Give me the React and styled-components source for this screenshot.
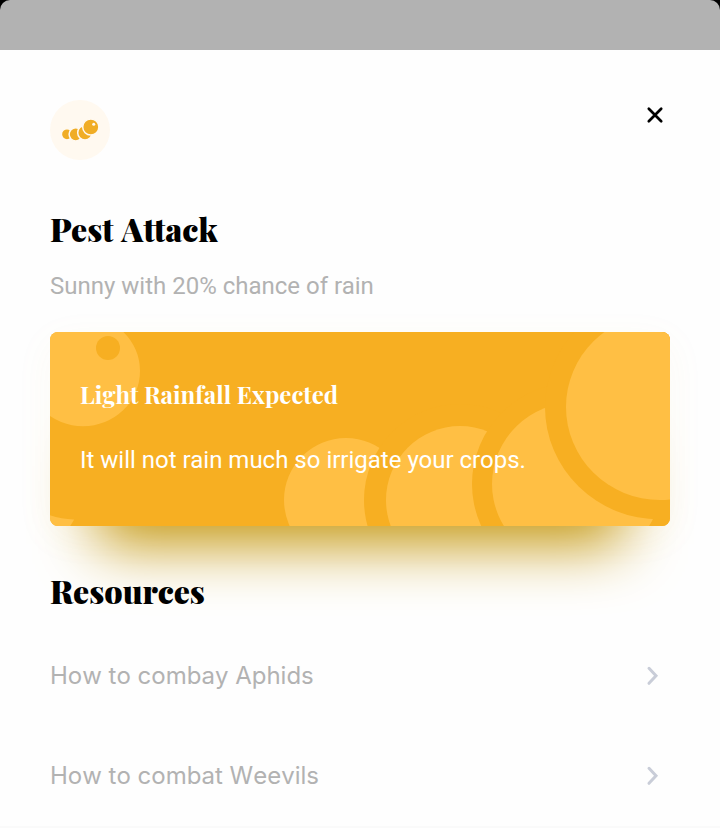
import React from "react";
import styled, { createGlobalStyle } from "styled-components";

const GlobalStyle = createGlobalStyle`
  *, *::before, *::after { box-sizing: border-box; }
  body { margin: 0; background: #000; }
`;

const Screen = styled.main`
  height: 828px;
  overflow: hidden;
  border-radius: 10px 10px 0 0;
  background: #b2b2b2;
  padding-top: 50px;
  font-family: Roboto, "Liberation Sans", sans-serif;
`;

const Sheet = styled.section`
  height: 778px;
  padding: 50px 50px 0;
  background: #fefefe;
`;

const Header = styled.header`
  display: flex;
  justify-content: space-between;
  align-items: flex-start;
  height: 60px;
`;

const CloseButton = styled.button`
  display: flex;
  width: 30px;
  height: 30px;
  padding: 0;
  border: 0;
  background: transparent;
`;

const Heading = styled.h2`
  margin: ${(p) => p.$top}px 0 0;
  height: 44px;
  font: 900 32px/41px "Playfair Display", "Liberation Serif", serif;
  word-spacing: 2px;
  color: #000;
  white-space: nowrap;
`;

const Summary = styled.p`
  margin: 19px 0 0;
  height: 30px;
  font-size: 24px;
  line-height: 30px;
  color: #b2b2b2;
`;

const Card = styled.article`
  display: grid;
  height: 194px;
  margin-top: 31px;
  border-radius: 8px;
  background: #f7af22;
  overflow: hidden;
  box-shadow: 0 66px 60px -48px #c4960c, 0 10px 40px rgba(220, 180, 60, 0.05);

  > * { grid-area: 1 / 1; }
`;

const CardBody = styled.div`
  z-index: 1;
  padding: 47px 30px 0;
  color: #fff;
`;

const CardTitle = styled.h3`
  margin: 0;
  height: 32px;
  font: 700 24px/30px "Playfair Display", "Liberation Serif", serif;
`;

const CardText = styled.p`
  margin: 34px 0 0;
  font-size: 24px;
  line-height: 30px;
`;

const ResourceList = styled.ul`
  list-style: none;
  margin: 12px 0 0;
  padding: 0;
`;

const ResourceRow = styled.li`
  display: flex;
  align-items: center;
  justify-content: space-between;
  height: 100px;
  font: 400 24px/30px Inter, sans-serif;
  font-kerning: none;
  color: #b2b2b2;

  svg { margin-right: 10px; }
`;

const Divider = styled.div`
  height: 2px;
  margin: 0 -50px;
  background: #fafafa;
`;

const PestBadge = () => (
  <svg width="60" height="60" viewBox="50 100 60 60">
    <circle cx="80" cy="130" r="30" fill="#fff9f0" />
    <g fill="#f0ad26" stroke="#fff9f0" strokeWidth="1.5">
      <circle cx="67" cy="134.3" r="5.6" />
      <circle cx="75.7" cy="134.3" r="6.6" />
      <circle cx="85" cy="132.7" r="7.3" />
      <circle cx="90.8" cy="127" r="8.1" />
    </g>
    <circle cx="93.7" cy="124.2" r="1.5" fill="#fff9f0" />
  </svg>
);

const CloseIcon = () => (
  <svg width="30" height="30" viewBox="0 0 30 30">
    <path d="M8.8 8.8L21.2 21.2M21.2 8.8L8.8 21.2" stroke="#000" strokeWidth="2.7" strokeLinecap="round" />
  </svg>
);

const Chevron = () => (
  <svg width="15" height="20" viewBox="0 0 15 20">
    <path d="M4 2.3L11 9.8L4 17.3" fill="none" stroke="#c9cdd8" strokeWidth="3" strokeLinecap="round" strokeLinejoin="miter" />
  </svg>
);

const Caterpillar = () => (
  <svg width="620" height="194" viewBox="50 332 620 194">
    <g fill="#ffbf44">
      <ellipse cx="83" cy="371" rx="57" ry="55.3" />
      <path d="M50 515.3Q62 519.5 74.2 519.4L70.2 526H50Z" />
      <circle cx="346" cy="500" r="62" />
    </g>
    <g fill="#f7af22">
      <circle cx="108" cy="348" r="12" />
      <circle cx="460" cy="500" r="96" />
    </g>
    <circle cx="460" cy="500" r="74" fill="#ffbf44" />
    <ellipse cx="576.5" cy="484" rx="104.5" ry="102" fill="#f7af22" />
    <ellipse cx="576.5" cy="484" rx="84.5" ry="82" fill="#ffbf44" />
    <ellipse cx="660" cy="407" rx="115" ry="112.5" fill="#f7af22" />
    <ellipse cx="660" cy="407" rx="94" ry="93" fill="#ffbf44" />
  </svg>
);

const resources = ["How to combay Aphids", "How to combat Weevils"];

export default function App() {
  return (
    <>
      <GlobalStyle />
      <Screen>
        <Sheet>
          <Header>
            <PestBadge />
            <CloseButton aria-label="Close"><CloseIcon /></CloseButton>
          </Header>
          <Heading $top={48}>Pest Attack</Heading>
          <Summary>Sunny with 20% chance of rain</Summary>
          <Card>
            <Caterpillar />
            <CardBody>
              <CardTitle>Light Rainfall Expected</CardTitle>
              <CardText>It will not rain much so irrigate your crops.</CardText>
            </CardBody>
          </Card>
          <Heading $top={44}>Resources</Heading>
          <ResourceList>
            {resources.map((title) => (
              <ResourceRow key={title}>{title}<Chevron /></ResourceRow>
            ))}
          </ResourceList>
          <Divider />
        </Sheet>
      </Screen>
    </>
  );
}
